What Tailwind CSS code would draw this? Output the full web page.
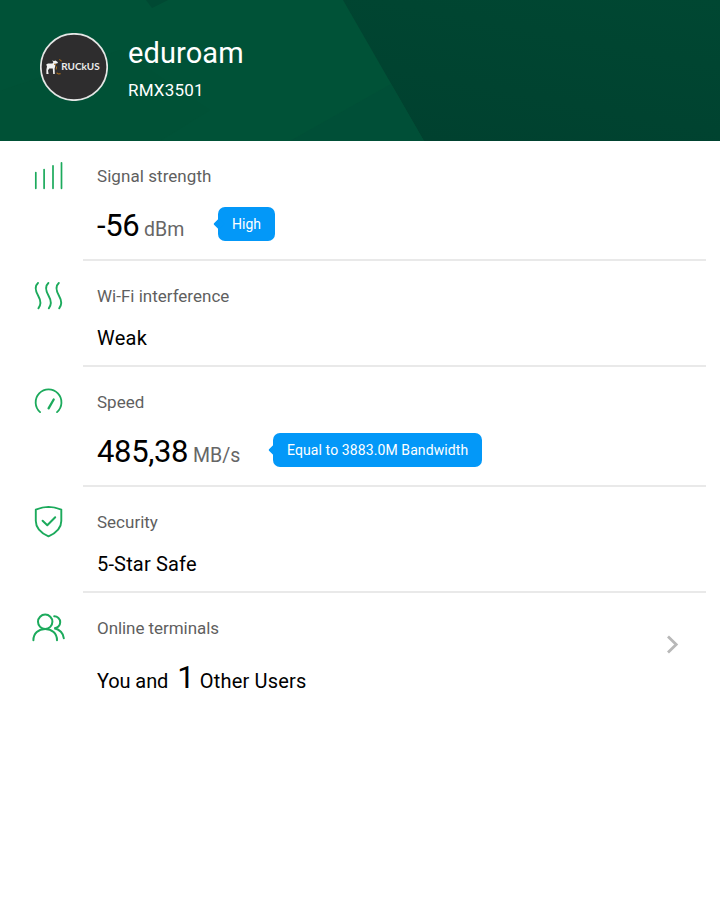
<!DOCTYPE html>
<html lang="en">
<head>
  <meta charset="UTF-8">
  <meta name="viewport" content="width=device-width, initial-scale=1.0">
  <title>Wi-Fi details</title>
  <script src="https://cdn.jsdelivr.net/npm/@tailwindcss/browser@4"></script>
</head>
<body class="bg-white text-black min-h-screen font-['Roboto',sans-serif]">

  <!-- Header -->
  <header class="relative h-[141px] overflow-hidden bg-[#004430]">
    <svg class="absolute inset-0" width="720" height="141" viewBox="0 0 720 141">
      <defs>
        <linearGradient id="dark" x1="0" y1="1" x2="1" y2="0">
          <stop offset="0.3" stop-color="#00412f" />
          <stop offset="1" stop-color="#004732" />
        </linearGradient>
      </defs>
      <rect width="720" height="141" fill="url(#dark)" />
      <path d="M0 0H343L424 141H0Z" fill="#005237" />
      <path d="M146 0H168L152 8Z" fill="#004933" />
      <path d="M290 141L391 84L424 141Z" fill="#004f37" />
      <path d="M0 91L120 50L210 110L160 141H0Z" fill="#005136" />
    </svg>
    <div class="relative flex pl-10 pt-[33px]">
      <svg width="68" height="68" viewBox="0 0 68 68">
        <circle cx="34" cy="34" r="33.2" fill="#2e2d2e" stroke="#e4e6e5" stroke-width="1.7" />
        <path d="M6.2 31.6L8 30.6H12.5L13.4 29L12 27.5L14 28L15.5 27.6L18 29.2L17.2 30.4L15.5 30.6L15.2 33.5L14.6 35.5L14.8 41H13.2L12.8 35.6H9.2L8 37.4L8.6 41H6.4V36.6L7 33.5Z" fill="#f2f2f2" />
        <path d="M19.3 26.4L21.6 28.2M14.2 31L15.8 32M16.6 33.5L16.2 36.5M16.6 39.8L18.3 41L20.6 40.6" fill="none" stroke="#a96b1d" stroke-width="1.1" />
        <text x="21.3" y="36.9" font-family="Lato, sans-serif" font-weight="700" font-size="9" textLength="38.3" lengthAdjust="spacingAndGlyphs" fill="#ececec">RUCkUS</text>
      </svg>
      <div class="ml-5 text-white">
        <h1 class="text-[29px] leading-10 tracking-[0.1px]">eduroam</h1>
        <p class="mt-[5px] text-[17px] leading-6 tracking-[0.2px]">RMX3501</p>
      </div>
    </div>
  </header>

  <main>
    <!-- Signal strength -->
    <section class="flex h-[120px]">
      <div class="w-[83px] shrink-0 pl-8 pt-[19px]">
        <svg width="34" height="34" viewBox="0 0 34 34" fill="none" stroke="#1caa5c" stroke-width="1.7" stroke-linecap="round">
          <path d="M3.8 12.5V28.3M12.1 9.5V28.3M21 5.8V28.3M29.5 2.8V28.3" />
        </svg>
      </div>
      <div class="mr-3.5 grow border-b-2 border-[#e9e9e9] pl-3.5 pt-[23px]">
        <h2 class="text-[17px] leading-6 tracking-[0.06px] text-[#5f5f5f]">Signal strength</h2>
        <div class="mt-[18px] flex items-baseline">
          <span class="w-[47px] text-[31px] leading-10 tracking-[-0.4px]">-56</span>
          <span class="w-[74px] text-[19.5px] leading-10 text-[#666]">dBm</span>
          <span class="relative mt-px h-[34px] self-start rounded-[7px] bg-[#0398f8] px-3.5 text-sm leading-[34px] text-white">
            <i class="absolute -left-[3px] top-[13px] size-2 rotate-45 rounded-[1px] bg-[#0398f8]"></i>High
          </span>
        </div>
      </div>
    </section>

    <!-- Wi-Fi interference -->
    <section class="flex h-[106px]">
      <div class="w-[83px] shrink-0 pl-8 pt-[19px]">
        <svg width="34" height="34" viewBox="0 0 34 34" fill="none" stroke="#1caa5c" stroke-width="1.9" stroke-linecap="round">
          <path d="M6 3C1.5 7 4 12 6.3 16S9 25 6.4 28.3M16.4 3C11.9 7 14.4 12 16.7 16S19.4 25 16.8 28.3M26.8 3C22.3 7 24.8 12 27.1 16S29.8 25 27.2 28.3" />
        </svg>
      </div>
      <div class="mr-3.5 grow border-b-2 border-[#e9e9e9] pl-3.5 pt-[23px]">
        <h2 class="text-[17px] leading-6 text-[#5f5f5f]">Wi-Fi interference</h2>
        <p class="mt-[18px] text-xl leading-6 tracking-[0.25px]">Weak</p>
      </div>
    </section>

    <!-- Speed -->
    <section class="flex h-[120px]">
      <div class="w-[83px] shrink-0 pl-8 pt-[19px]">
        <svg width="34" height="34" viewBox="0 0 34 34" fill="none" stroke="#1caa5c" stroke-width="1.8" stroke-linecap="round">
          <path d="M8.1 26.1A12.9 12.9 0 1 1 25 26.1" />
          <path d="M16.6 22.3L21.7 13.5" stroke-width="2.3" />
        </svg>
      </div>
      <div class="mr-3.5 grow border-b-2 border-[#e9e9e9] pl-3.5 pt-[23px]">
        <h2 class="text-[17px] leading-6 text-[#5f5f5f]">Speed</h2>
        <div class="mt-[18px] flex items-baseline">
          <span class="w-[96px] text-[31px] leading-10 tracking-[-0.35px]">485,38</span>
          <span class="w-20 text-[19.5px] leading-10 text-[#666]">MB/s</span>
          <span class="relative mt-px h-[34px] self-start rounded-[7px] bg-[#0398f8] px-3.5 text-sm leading-[34px] tracking-[0.1px] text-white">
            <i class="absolute -left-[3px] top-[13px] size-2 rotate-45 rounded-[1px] bg-[#0398f8]"></i>Equal to 3883.0M Bandwidth
          </span>
        </div>
      </div>
    </section>

    <!-- Security -->
    <section class="flex h-[106px]">
      <div class="w-[83px] shrink-0 pl-8 pt-[17px]">
        <svg width="34" height="34" viewBox="0 0 34 34" fill="none" stroke="#1caa5c" stroke-width="1.9" stroke-linecap="round" stroke-linejoin="round">
          <path d="M3.8 5.6Q10.5 3 16.5 2.9Q22.5 3 29.3 5.6V17C29.3 25.5 23 29.5 16.5 32.4C10 29.5 3.8 25.5 3.8 17Z" />
          <path d="M10.6 16.7L15.3 21.2L23.2 13.3" stroke-width="2" />
        </svg>
      </div>
      <div class="mr-3.5 grow border-b-2 border-[#e9e9e9] pl-3.5 pt-[23px]">
        <h2 class="text-[17px] leading-6 text-[#5f5f5f]">Security</h2>
        <p class="mt-[18px] text-xl leading-6 tracking-[0.17px]">5-Star Safe</p>
      </div>
    </section>

    <!-- Online terminals -->
    <section class="flex h-[106px]">
      <div class="w-[83px] shrink-0 pl-8 pt-[19px]">
        <svg width="34" height="34" viewBox="0 0 34 34" fill="none" stroke="#1caa5c" stroke-width="2" stroke-linecap="round">
          <circle cx="13.2" cy="9.8" r="7.2" />
          <path d="M1.4 28.3C1.4 21.5 6.5 17 13.2 17S25 21.5 25 28.3" />
          <path d="M22.2 4.2C25.5 4.2 28.2 6.8 28.2 10.2S25.5 16.3 22.2 16.3C27.5 17.3 31.5 21.3 31.8 26.3" />
        </svg>
      </div>
      <div class="flex grow justify-between pl-3.5 pr-[41px] pt-[23px]">
        <div>
          <h2 class="text-[17px] leading-6 tracking-[-0.06px] text-[#5f5f5f]">Online terminals</h2>
          <p class="mt-[18px] flex items-baseline text-xl leading-10">
            <span class="tracking-[-0.1px]">You and</span>
            <span class="ml-[9px] text-[31px] leading-10">1</span>
            <span class="ml-[5px] tracking-[0.2px]">Other Users</span>
          </p>
        </div>
        <svg class="mt-[18px]" width="13" height="20" viewBox="0 0 13 20" fill="none" stroke="#b8b8b8" stroke-width="2.8">
          <path d="M2 2.5L10.2 10.5L2 18.5" />
        </svg>
      </div>
    </section>
  </main>
</body>
</html>
